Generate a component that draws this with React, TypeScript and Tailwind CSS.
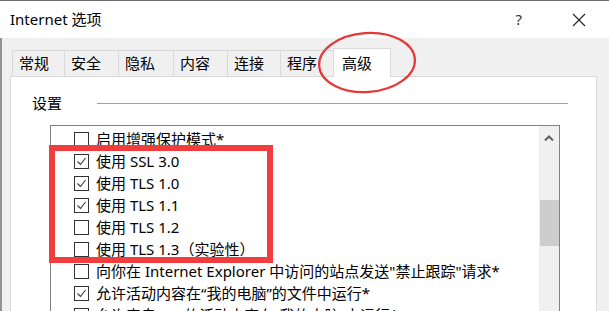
const font = { fontFamily: '"Noto Sans", "Noto Sans CJK SC", sans-serif' };

const tabs = [
  { label: '常规', w: 'w-[53px]' },
  { label: '安全', w: 'w-[55px]' },
  { label: '隐私', w: 'w-[56px]' },
  { label: '内容', w: 'w-[55px]' },
  { label: '连接', w: 'w-[54px]' },
  { label: '程序', w: 'w-[54px]' },
];

const rows = [
  { text: '启用增强保护模式*', checked: false },
  { text: '使用 SSL 3.0', checked: true },
  { text: '使用 TLS 1.0', checked: true },
  { text: '使用 TLS 1.1', checked: true },
  { text: '使用 TLS 1.2', checked: false },
  { text: '使用 TLS 1.3（实验性）', checked: false },
  { text: '向你在 Internet Explorer 中访问的站点发送"禁止跟踪"请求*', checked: false },
  { text: '允许活动内容在“我的电脑”的文件中运行*', checked: true },
  { text: '允许来自 CD 的活动内容在“我的电脑”中运行*', checked: false },
];

function CheckBox({ checked }: { checked: boolean }) {
  return (
    <div className="flex h-[15px] w-[15px] shrink-0 items-center justify-center border border-[#333333] bg-white">
      {checked && (
        <svg width="13" height="13" viewBox="0 0 13 13">
          <polyline points="2.5,6.5 5.5,9.5 10.5,3" fill="none" stroke="#333" strokeWidth="1.1" />
        </svg>
      )}
    </div>
  );
}

export default function App() {
  return (
    <div className="relative flex h-[311px] w-[609px] flex-col overflow-hidden bg-[#f0f0f0] text-[15px] text-black" style={font}>
      {/* 标题栏 */}
      <div className="flex h-[38px] shrink-0 items-center border-t border-[#6d6d6d] bg-white pl-[10px]">
        <span>Internet 选项</span>
        <span className="ml-auto text-[#333]">?</span>
        <svg className="ml-[50px] mr-[23px]" width="14" height="14" viewBox="0 0 14 14">
          <path d="M1 1 L13 13 M13 1 L1 13" stroke="#222" strokeWidth="1.1" />
        </svg>
      </div>

      <div className="flex flex-1 flex-col border-l-2 border-[#8d9597] pl-[8px] pr-[12px]">
        {/* 选项卡 */}
        <div className="mt-[10px] flex h-[28px] items-end pl-[2px]">
          {tabs.map((t) => (
            <div
              key={t.label}
              className={`${t.w} -ml-px flex h-[26px] items-center border border-b-0 border-[#d9d9d9] bg-[#f0f0f0] pl-[6px] first:ml-0`}
            >
              {t.label}
            </div>
          ))}
          <div className="relative z-10 -mb-px -ml-px flex h-[29px] w-[58px] items-center border border-b-0 border-[#d9d9d9] bg-white pl-[8px]">
            高级
          </div>
        </div>

        {/* 面板 */}
        <div className="flex-1 border border-[#d9d9d9] bg-white pl-[21px] pt-[16px]">
          <div className="flex h-[20px] items-center pr-[28px]">
            <span className="w-[65px]">设置</span>
            <div className="h-px flex-1 bg-[#a0a0a0]" />
          </div>

          <div className="ml-[18px] mt-[12px] flex h-[200px] w-[510px] border border-[#828282]">
            <div className="flex-1 pl-[23px] pt-[2px]">
              {rows.map((r) => (
                <div key={r.text} className="flex h-[22px] items-center gap-[7px] whitespace-nowrap">
                  <CheckBox checked={r.checked} />
                  <span>{r.text}</span>
                </div>
              ))}
            </div>
            <div className="flex w-[20px] flex-col items-center bg-[#f0f0f0]">
              <svg className="mt-[9px]" width="10" height="6" viewBox="0 0 10 6">
                <polyline points="1,5.5 5,1.5 9,5.5" fill="none" stroke="#606060" strokeWidth="2" />
              </svg>
              <div className="mt-[59px] h-[46px] w-[19px] bg-[#cdcdcd]" />
            </div>
          </div>
        </div>
      </div>

      {/* 红色标注 */}
      <div className="absolute left-[49px] top-[145px] h-[118px] w-[224px] border-[6px] border-[#f03d3d]" />
      <svg className="absolute left-[316px] top-[30px]" width="104" height="66" viewBox="0 0 104 66">
        <ellipse cx="51" cy="32.5" rx="48" ry="29.5" fill="none" stroke="#e53838" strokeWidth="2.2" transform="rotate(-4 51 32.5)" />
      </svg>
    </div>
  );
}
